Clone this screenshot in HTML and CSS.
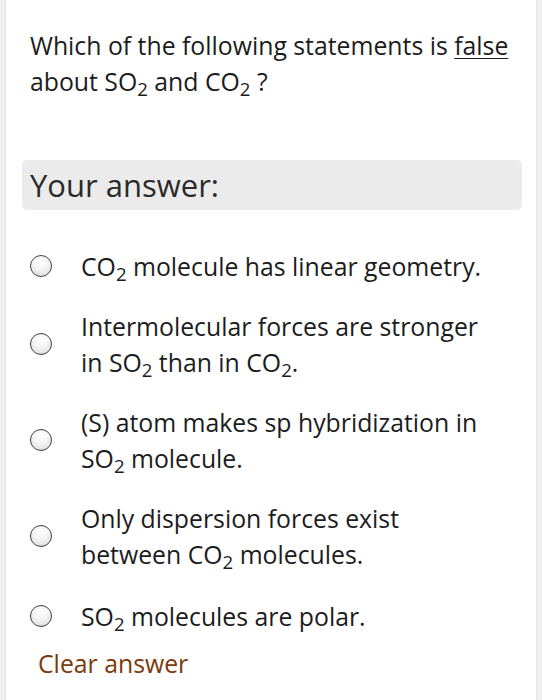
FILE: index.html
```html
<!DOCTYPE html>
<html>
<head>
<meta charset="utf-8">
<link rel="stylesheet" href="styles.css">
</head>
<body>
<div class="page">
  <div class="card">
    <p class="question">Which of the following statements is <u>false</u> about SO<sub>2</sub> and CO<sub>2</sub> ?</p>
    <div class="answer-box">Your answer:</div>
    <ul class="options">
      <li class="option"><span class="radio"></span><span class="label">CO<sub>2</sub> molecule has linear geometry.</span></li>
      <li class="option"><span class="radio"></span><span class="label">Intermolecular forces are stronger in SO<sub>2</sub> than in CO<sub>2</sub>.</span></li>
      <li class="option"><span class="radio"></span><span class="label">(S) atom makes sp hybridization in SO<sub>2</sub> molecule.</span></li>
      <li class="option"><span class="radio"></span><span class="label">Only dispersion forces exist between CO<sub>2</sub> molecules.</span></li>
      <li class="option option-last"><span class="radio"></span><span class="label">SO<sub>2</sub> molecules are polar.</span></li>
    </ul>
    <div class="clear">Clear answer</div>
  </div>
</div>
</body>
</html>
```

FILE: styles.css
```css
html, body {
  margin: 0;
  padding: 0;
  background: #efefef;
}
body {
  font-family: "Open Sans", "Noto Sans", sans-serif;
  color: #1c1c1c;
}
.page {
  padding: 0 5px 0 5px;
  height: 700px;
  box-sizing: border-box;
}
.card {
  background: #fff;
  border-left: 1px solid #e2e2e2;
  border-right: 1px solid #e6e6e6;
  height: 100%;
  padding: 27px 0 0 0;
  box-sizing: border-box;
}
sub {
  font-size: 0.75em;
  vertical-align: -0.28em;
  line-height: 0;
}
.question {
  margin: 0;
  padding: 0 20px 0 24px;
  font-size: 24.8px;
  line-height: 36px;
}
.question u {
  text-underline-offset: 3px;
  text-decoration-thickness: 1px;
}
.answer-box {
  margin: 61px 14px 0 16px;
  height: 50px;
  background: #ebebeb;
  border-radius: 5px;
  padding-left: 8px;
  font-size: 31px;
  line-height: 50px;
  color: #2a2a2a;
}
.options {
  list-style: none;
  margin: 38px 0 0 0;
  padding: 0 20px 0 24px;
  display: flex;
  flex-direction: column;
  gap: 24px;
}
.option {
  display: flex;
  align-items: center;
  gap: 29px;
}
.option-last {
  margin-top: 2px;
}
.radio {
  flex: none;
  width: 20px;
  height: 20px;
  border: 1.6px solid #444;
  border-radius: 50%;
  background: radial-gradient(circle at 50% 30%, #ffffff 0%, #f3f3f3 45%, #d6d6d6 100%);
}
.label {
  font-size: 24.8px;
  line-height: 36px;
  max-width: 408px;
}
.clear {
  margin: 11px 0 0 32px;
  font-size: 24.8px;
  line-height: 36px;
  color: #7a3a0c;
}
```
